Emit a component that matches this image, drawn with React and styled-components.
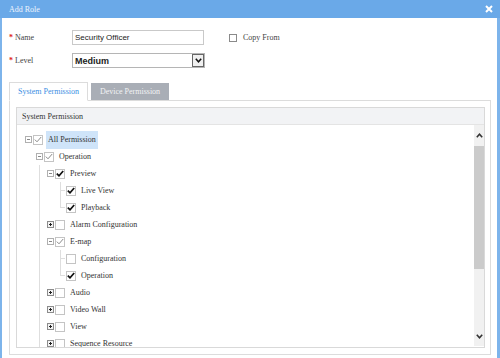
import React from 'react';
import styled, { createGlobalStyle } from 'styled-components';

const Global = createGlobalStyle`
  html, body { margin: 0; padding: 0; width: 500px; height: 358px; overflow: hidden; background: #fff; }
  * { box-sizing: border-box; }
`;

const Dialog = styled.div`
  width: 500px;
  height: 358px;
  background: #7db4eb;
  display: flex;
  flex-direction: column;
  font-family: "Liberation Serif", serif;
  font-size: 8px;
  color: #333;
`;

const TitleBar = styled.div`
  height: 18px;
  flex: none;
  display: flex;
  align-items: center;
  justify-content: space-between;
  padding: 0 7px 0 9px;
  background: #6aa9e8;
  color: #eef5fd;
`;

const Body = styled.div`
  flex: 1;
  min-height: 0;
  margin: 0 3px 0 2px;
  background: #fff;
  padding: 12px 6px 3px 7px;
  display: flex;
  flex-direction: column;
`;

const FieldRow = styled.div`
  display: flex;
  align-items: center;
  height: 15px;
  margin-bottom: ${(p) => p.$mb || 0}px;
`;

const Label = styled.div`
  width: 63px;
  display: flex;
  align-items: center;
  color: #444;
`;

const Star = styled.span`
  color: #e02020;
  width: 6px;
  font-size: 8px;
  font-weight: bold;
`;

const TextInput = styled.div`
  width: 132px;
  height: 15px;
  border: 1px solid #c9c9c9;
  display: flex;
  align-items: center;
  padding-left: 2px;
  font-family: "Liberation Sans", Arial, sans-serif;
  font-size: 8px;
  color: #222;
`;

const Select = styled.div`
  width: 133px;
  height: 15px;
  border: 1px solid #b5b5b5;
  display: flex;
  align-items: center;
  justify-content: space-between;
  padding-left: 2px;
  font-family: "Liberation Sans", Arial, sans-serif;
  font-size: 9px;
  font-weight: bold;
  color: #222;
`;

const SelectArrow = styled.div`
  width: 12px;
  height: 13px;
  border: 1px solid #666;
  background: #f0f0f0;
  display: flex;
  align-items: center;
  justify-content: center;
`;

const CopyFrom = styled.label`
  margin-left: 25px;
  display: flex;
  align-items: center;
  gap: 6px;
  color: #444;
`;

const SmallBox = styled.span`
  width: 8px;
  height: 8px;
  border: 1px solid #8a8a8a;
  background: #fff;
`;

const TabStrip = styled.div`
  display: flex;
  align-items: flex-end;
  height: 19px;
  border-bottom: 1px solid #dcdcdc;
  margin-top: 14px;
  flex: none;
`;

const Tab = styled.div`
  height: ${(p) => (p.$active ? 19 : 17)}px;
  width: ${(p) => p.$w}px;
  margin-left: ${(p) => p.$ml || 0}px;
  margin-bottom: ${(p) => (p.$active ? -1 : 0)}px;
  display: flex;
  align-items: center;
  justify-content: center;
  background: ${(p) => (p.$active ? '#fff' : '#a9aeb6')};
  color: ${(p) => (p.$active ? '#3a8ee3' : '#f2f3f5')};
  border: ${(p) => (p.$active ? '1px solid #dcdcdc' : 'none')};
  border-bottom: ${(p) => (p.$active ? '1px solid #fff' : 'none')};
`;

const Panel = styled.div`
  flex: 1;
  min-height: 0;
  width: 482px;
  border: 1px solid #dcdcdc;
  border-top: none;
  padding: 6px 5px 6px 6px;
  display: flex;
`;

const InnerBox = styled.div`
  flex: 1;
  border: 1px solid #d9d9d9;
  display: flex;
  flex-direction: column;
  min-height: 0;
`;

const BoxHeader = styled.div`
  height: 17px;
  flex: none;
  background: #f2f3f5;
  border-bottom: 1px solid #e4e4e4;
  display: flex;
  align-items: center;
  padding-left: 5px;
  color: #333;
`;

const BoxContent = styled.div`
  flex: 1;
  min-height: 0;
  display: flex;
  overflow: hidden;
`;

const Tree = styled.div`
  flex: 1;
  padding-top: 6px;
`;

const line = '#dedede';

const Row = styled.div`
  height: 17px;
  display: flex;
  align-items: center;
  padding-left: ${(p) => 8 + p.$level * 11}px;
  background: ${(p) =>
    p.$level >= 2 ? `linear-gradient(${line}, ${line}) no-repeat 22px 0 / 1px 100%` : 'none'};
`;

const Expander = styled.span`
  width: 7px;
  height: 7px;
  flex: none;
  display: flex;
`;

const Connector = styled.span`
  width: 7px;
  height: 17px;
  flex: none;
  background:
    linear-gradient(${line}, ${line}) no-repeat 2px 0 / 1px ${(p) => (p.$last ? '9px' : '100%')},
    linear-gradient(${line}, ${line}) no-repeat 2px 8px / 5px 1px;
`;

const CheckBox = styled.span`
  width: 10px;
  height: 10px;
  flex: none;
  margin-left: 1px;
  border: 1px solid #c4c4c4;
  background: #fff;
  display: flex;
  align-items: center;
  justify-content: center;
`;

const NodeLabel = styled.span`
  margin-left: ${(p) => (p.$hl ? 3 : 5)}px;
  padding: 0 ${(p) => (p.$hl ? 2 : 0)}px;
  height: ${(p) => (p.$hl ? 18 : 17)}px;
  display: flex;
  align-items: center;
  background: ${(p) => (p.$hl ? '#cfe4f9' : 'transparent')};
  color: #333;
  white-space: nowrap;
`;

const ScrollBar = styled.div`
  width: 10px;
  flex: none;
  background: #f1f1f1;
  display: flex;
  flex-direction: column;
  margin-bottom: 1px;
`;

const ScrollBtn = styled.div`
  height: ${(p) => p.$h}px;
  flex: none;
  display: flex;
  align-items: center;
  justify-content: center;
`;

const Thumb = styled.div`
  height: 123px;
  flex: none;
  background: #cbcbcb;
`;

const Track = styled.div`
  flex: 1;
`;

const Chevron = ({ up, color = '#333', w = 7, h = 5, sw = 1.6 }) => (
  <svg width={w} height={h} viewBox="0 0 7 5">
    <path
      d={up ? 'M0.8 4.2 L3.5 1.2 L6.2 4.2' : 'M0.8 0.8 L3.5 3.8 L6.2 0.8'}
      fill="none"
      stroke={color}
      strokeWidth={sw}
    />
  </svg>
);

const CloseIcon = () => (
  <svg width="8" height="8" viewBox="0 0 8 8">
    <path d="M1 1 L7 7 M7 1 L1 7" stroke="#fff" strokeWidth="2" />
  </svg>
);

const ExpandIcon = ({ plus }) => (
  <svg width="7" height="7" viewBox="0 0 7 7">
    <rect x="0.5" y="0.5" width="6" height="6" fill={plus ? '#f4f4f4' : '#fff'} stroke={plus ? '#8c8c8c' : '#b0b0b0'} />
    <path d="M2 3.5 H5" stroke={plus ? '#222' : '#888'} strokeWidth="1" />
    {plus && <path d="M3.5 2 V5" stroke="#222" strokeWidth="1" />}
  </svg>
);

const Check = ({ state }) => {
  if (state === 'none') return null;
  const full = state === 'full';
  return (
    <svg width="8" height="7" viewBox="0 0 8 7">
      <path
        d="M0.8 3.6 L3 5.8 L7.2 1"
        fill="none"
        stroke={full ? '#111' : '#8a8a8a'}
        strokeWidth={full ? 1.7 : 1}
      />
    </svg>
  );
};

const tree = [
  { level: 0, label: 'All Permission', exp: 'minus', check: 'partial', hl: true },
  { level: 1, label: 'Operation', exp: 'minus', check: 'partial' },
  { level: 2, label: 'Preview', exp: 'minus', check: 'full' },
  { level: 3, label: 'Live View', check: 'full' },
  { level: 3, label: 'Playback', check: 'full', last: true },
  { level: 2, label: 'Alarm Configuration', exp: 'plus', check: 'none' },
  { level: 2, label: 'E-map', exp: 'minus', check: 'partial' },
  { level: 3, label: 'Configuration', check: 'none' },
  { level: 3, label: 'Operation', check: 'full', last: true },
  { level: 2, label: 'Audio', exp: 'plus', check: 'none' },
  { level: 2, label: 'Video Wall', exp: 'plus', check: 'none' },
  { level: 2, label: 'View', exp: 'plus', check: 'none' },
  { level: 2, label: 'Sequence Resource', exp: 'plus', check: 'none' },
];

export default function App() {
  return (
    <>
      <Global />
      <Dialog>
        <TitleBar>
          <span>Add Role</span>
          <CloseIcon />
        </TitleBar>
        <Body>
          <FieldRow $mb={8}>
            <Label>
              <Star>*</Star>Name
            </Label>
            <TextInput>Security Officer</TextInput>
            <CopyFrom>
              <SmallBox />
              Copy From
            </CopyFrom>
          </FieldRow>
          <FieldRow>
            <Label>
              <Star>*</Star>Level
            </Label>
            <Select>
              <span>Medium</span>
              <SelectArrow>
                <Chevron color="#111" w={7} h={5} sw={1.5} />
              </SelectArrow>
            </Select>
          </FieldRow>
          <TabStrip>
            <Tab $active $w={79}>System Permission</Tab>
            <Tab $w={78} $ml={3}>Device Permission</Tab>
          </TabStrip>
          <Panel>
            <InnerBox>
              <BoxHeader>System Permission</BoxHeader>
              <BoxContent>
                <Tree>
                  {tree.map((n, i) => (
                    <Row key={i} $level={n.level}>
                      {n.level === 3 ? (
                        <Connector $last={n.last} />
                      ) : (
                        <Expander>
                          <ExpandIcon plus={n.exp === 'plus'} />
                        </Expander>
                      )}
                      <CheckBox>
                        <Check state={n.check} />
                      </CheckBox>
                      <NodeLabel $hl={n.hl}>{n.label}</NodeLabel>
                    </Row>
                  ))}
                </Tree>
                <ScrollBar>
                  <ScrollBtn $h={21}>
                    <Chevron up />
                  </ScrollBtn>
                  <Thumb />
                  <Track />
                  <ScrollBtn $h={20}>
                    <Chevron />
                  </ScrollBtn>
                </ScrollBar>
              </BoxContent>
            </InnerBox>
          </Panel>
        </Body>
      </Dialog>
    </>
  );
}
